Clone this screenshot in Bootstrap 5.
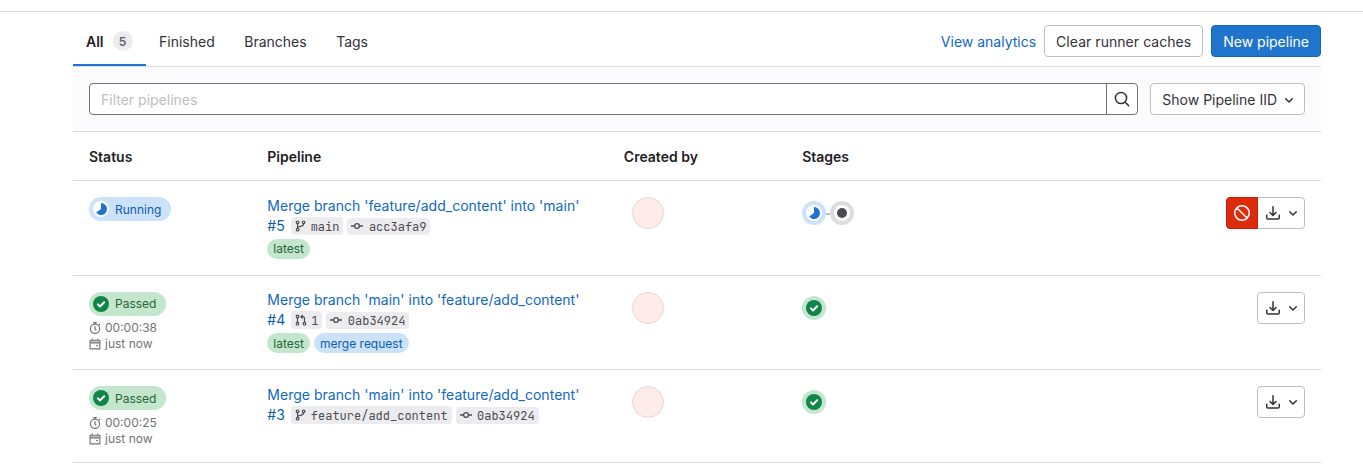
<!DOCTYPE html>
<html lang="en">
<head>
<meta charset="utf-8">
<meta name="viewport" content="width=device-width, initial-scale=1">
<title>Pipelines</title>
<link href="https://cdn.jsdelivr.net/npm/bootstrap@5.3.0/dist/css/bootstrap.min.css" rel="stylesheet">
<style>
body{font-family:Inter,"Noto Sans",sans-serif;font-size:14px;line-height:20px;color:#333238;background:#fff;overflow:hidden}
a{text-decoration:none;color:#1068bf}
svg{display:block;flex:none}
.topline{height:12px;border-bottom:1px solid #dcdcde}
.page{width:1248px;margin-left:73px}
.tabs{height:55px;border-bottom:1px solid #dcdcde}
.tabs .nav-link{color:#333238;padding:0 16.5px 0 13px;height:54px;line-height:60px;border-radius:0}
.tabs .nav-link.active{font-weight:600;color:#1f1e24;box-shadow:inset 0 -2px 0 #1f75cb;width:73px;padding:6px 0 0 13px;line-height:20px;gap:9px}
.count{background:#ececef;color:#626168;font-size:12px;font-weight:600;width:20px;height:20px;line-height:21px;border-radius:10px;text-align:center;margin-bottom:2px}
.analytics{padding-top:2px}
.btn{--bs-btn-font-size:14px;--bs-btn-line-height:20px;--bs-btn-padding-y:5px;--bs-btn-padding-x:11px;--bs-btn-border-radius:4px;height:32px;white-space:nowrap}
.btn-plain{--bs-btn-color:#333238;--bs-btn-bg:#fff;--bs-btn-border-color:#bfbfc3}
.btn-new{--bs-btn-color:#fff;--bs-btn-bg:#1f75cb;--bs-btn-border-color:#1068bf}
.btn-clear{letter-spacing:.045px}
.btn-clear,.btn-new{padding-top:6px;padding-bottom:4px}
.btn-stop{--bs-btn-color:#fff;--bs-btn-bg:#dd2b0e;--bs-btn-border-color:#c91c00;width:32px;z-index:2}
.btn-dl{padding:0 3px 0 7px;gap:4px}
.btn-iid{padding:6px 7px 4px 11px}
.filters{height:65px;background:#fbfafd;border-bottom:1px solid #dcdcde;gap:12px}
.filters .form-control{font-size:14px;line-height:20px;height:32px;padding:5px 11px;border:1px solid #737278;border-radius:4px}
.filters .form-control::placeholder{color:#bfbfc3}
.btn-search{--bs-btn-bg:#fff;--bs-btn-color:#333238;--bs-btn-border-color:#737278;width:32px}
.pipes{table-layout:fixed;margin:0;color:inherit;--bs-table-bg:transparent;border-color:#dcdcde}
.pipes>:not(caption)>*>*{padding:16px 16px 10px;vertical-align:top}
.pipes th{font-weight:600;color:#1f1e24;height:48px;padding:15px 16px 12px!important}
.pipes td{height:94px}
.pipes .tall td{height:95px}
.pipes .short td{height:93px}
.status{height:24px;border-radius:12px;padding:0 10px 0 4px;gap:6px;font-size:12px;line-height:22px;vertical-align:top}
.tall .status span,.short .status span{padding-top:2px}
.meta{font-size:12px;line-height:16px;color:#737278;gap:4px}
.status + .meta{margin-top:4px}
.short .status + .meta{margin-top:5px}
.title{margin-top:-1px;letter-spacing:.02px}
.up .title{margin-top:-2px}
.num{margin-right:2px;color:#0b5cad}
.tagrow{margin-top:3px}
.tag-blue{background:#cbe2f9;color:#0b5cad}
.tag-green{background:#c3e6cd;color:#24663b}
.tag{font-size:12px;line-height:21px;height:20px;border-radius:10px;padding:0 6px}
.tall .tag{line-height:20px}
.ref{font-family:"JetBrains Mono","DejaVu Sans Mono",monospace;font-size:12px;line-height:16px;height:18px;background:#ececef;color:#4c4b51;border-radius:4px;padding:0 4px;gap:4px}
.ref span{padding-top:2px}
.ref.sha{gap:5.4px;height:17px;margin-top:1px;line-height:18px}
.ref.sha span{padding-top:1px}
.face{width:32px;height:32px;border-radius:50%;background:#feecea;border:1px solid #ecd5d3;margin-left:8px}
.link-bar{width:4px;height:2px;background:#bfbfc3;margin-top:2px}
</style>
</head>
<body>
<svg class="d-none" xmlns="http://www.w3.org/2000/svg">
<symbol id="chev" viewBox="0 0 16 16"><path fill="currentColor" d="M4.22 6.22a.75.75 0 0 1 1.06 0L8 8.94l2.72-2.72a.75.75 0 1 1 1.06 1.06l-3.25 3.25a.75.75 0 0 1-1.06 0L4.22 7.28a.75.75 0 0 1 0-1.06z"/></symbol>
<symbol id="dl" viewBox="0 0 16 16"><path fill="none" stroke="currentColor" stroke-width="1.5" stroke-linecap="round" stroke-linejoin="round" d="M8 1.7v8.600M5 7.500l3 3 3-3M1.750 10.200v2.500c0 .8.500 1.300 1.300 1.300h9.900c.8 0 1.300-.5 1.300-1.300v-2.500"/></symbol>
<symbol id="ban" viewBox="0 0 16 16"><path fill="none" stroke="currentColor" stroke-width="1.5" d="M15.25 8A7.25 7.25 0 1 1 .75 8a7.25 7.25 0 0 1 14.5 0zM3 3l10 10"/></symbol>
<symbol id="find" viewBox="0 0 16 16"><path fill="none" stroke="currentColor" stroke-width="1.5" stroke-linecap="round" d="M12.6 7A5.6 5.6 0 1 1 1.4 7a5.6 5.6 0 0 1 11.2 0zM11.2 11.2l3.4 3.4"/></symbol>
<symbol id="branch" viewBox="0 0 12 12"><g fill="none" stroke="currentColor" stroke-width="1.2"><circle cx="2.600" cy="2.300" r="1.300"/><circle cx="2.600" cy="9.700" r="1.300"/><circle cx="8.600" cy="2.300" r="1.300"/><path d="M2.600 3.600v4.800M8.600 3.600c0 2.200-1.200 2.600-3 2.700S2.800 6.900 2.600 8"/></g></symbol>
<symbol id="mr" viewBox="0 0 12 12"><g fill="none" stroke="currentColor" stroke-width="1.2"><circle cx="2.500" cy="2.500" r="1.300"/><circle cx="2.500" cy="9.700" r="1.300"/><circle cx="9.500" cy="9.700" r="1.300"/><path d="M2.500 4v4.300M9.500 8.300V4.500c0-1.200-.6-1.800-1.800-1.800H6.200M7.700.8 5.900 2.700l1.800 1.800"/></g></symbol>
<symbol id="commit" viewBox="0 0 12 12"><g fill="none" stroke="currentColor" stroke-width="1.300"><circle cx="6" cy="6" r="2.400"/><path d="M0 6h3.600M8.400 6H12"/></g></symbol>
<symbol id="timer" viewBox="0 0 12 12"><g fill="none" stroke="currentColor" stroke-width="1.200"><circle cx="6" cy="6.800" r="4.600"/><path d="M4.300.7h3.400M6 .8v1.500M6 4.300v2.600l1.400 1.300M10 1.800l1.200 1.200"/></g></symbol>
<symbol id="cal" viewBox="0 0 12 12"><path fill="none" stroke="currentColor" stroke-width="1.100" d="M1.100 2.300h9.800v8.600H1.100zM1 4.900h10M3.200.5v2M8.800.5v2"/><path fill="currentColor" fill-opacity=".4" d="M1.500 2.500h9v2.200h-9z"/><path fill="currentColor" d="M7.200 7h1.800v1.300H7.200z"/></symbol>
<symbol id="pass" viewBox="0 0 16 16"><circle cx="8" cy="8" r="8" fill="#108548"/><path fill="none" stroke="#fff" stroke-width="2" stroke-linecap="round" stroke-linejoin="round" d="M4.900 8.400l2.100 2.100 4.200-4.200"/></symbol>
<symbol id="run" viewBox="0 0 16 16"><circle cx="8" cy="8" r="8" fill="#fff"/><path fill="#1f75cb" d="M8 2a6 6 0 1 1-4.800 9.600L8 8z"/></symbol>
<symbol id="ring-run" viewBox="0 0 24 24"><circle cx="12" cy="12" r="12" fill="#cbe2f9"/><use href="#run" x="4" y="4" width="16" height="16"/></symbol>
<symbol id="ring-pass" viewBox="0 0 24 24"><circle cx="12" cy="12" r="12" fill="#c3e6cd"/><use href="#pass" x="4" y="4" width="16" height="16"/></symbol>
<symbol id="ring-wait" viewBox="0 0 24 24"><circle cx="12" cy="12" r="12" fill="#dcdcde"/><circle cx="12" cy="12" r="8" fill="#fff"/><circle cx="12" cy="12" r="5" fill="#4c4b51"/></symbol>
</svg>

<div class="topline"></div>
<main class="page">
  <div class="tabs d-flex justify-content-between">
    <ul class="nav flex-nowrap">
      <li class="nav-item"><a class="nav-link active d-flex align-items-center" href="#"><span>All</span><span class="count">5</span></a></li>
      <li class="nav-item"><a class="nav-link" href="#">Finished</a></li>
      <li class="nav-item"><a class="nav-link" href="#">Branches</a></li>
      <li class="nav-item"><a class="nav-link" href="#">Tags</a></li>
    </ul>
    <div class="d-flex align-items-center gap-2 pt-1">
      <a href="#" class="analytics">View analytics</a>
      <button class="btn btn-plain btn-clear">Clear runner caches</button>
      <button class="btn btn-new">New pipeline</button>
    </div>
  </div>
  <div class="filters d-flex align-items-center px-3">
    <div class="input-group flex-nowrap flex-fill">
      <input class="form-control" placeholder="Filter pipelines">
      <button class="btn btn-search d-flex align-items-center justify-content-center p-0" aria-label="Search"><svg width="16" height="16"><use href="#find"/></svg></button>
    </div>
    <button class="btn btn-plain btn-iid d-flex align-items-center flex-shrink-0">Show Pipeline IID<svg class="ms-1" width="16" height="16"><use href="#chev"/></svg></button>
  </div>
  <table class="table pipes">
    <colgroup><col style="width:14.286%"><col style="width:28.571%"><col style="width:14.286%"><col style="width:14.286%"><col style="width:28.571%"></colgroup>
    <thead><tr><th>Status</th><th>Pipeline</th><th>Created by</th><th>Stages</th><th></th></tr></thead>
    <tbody>
      <tr class="tall">
        <td><span class="status tag-blue d-inline-flex align-items-center"><svg width="16" height="16"><use href="#run"/></svg><span>Running</span></span></td>
        <td>
          <a class="title d-block text-nowrap" href="#">Merge branch 'feature/add_content' into 'main'</a>
          <div class="d-flex align-items-center gap-1"><a class="num" href="#">#5</a><span class="ref d-flex align-items-center"><svg width="12" height="12"><use href="#branch"/></svg><span>main</span></span><span class="ref sha d-flex align-items-center"><svg width="12" height="12"><use href="#commit"/></svg><span>acc3afa9</span></span></div>
          <div class="d-flex gap-1 tagrow"><span class="tag tag-green">latest</span></div>
        </td>
        <td><div class="face"></div></td>
        <td><div class="d-flex align-items-center pt-1"><svg width="24" height="24"><use href="#ring-run"/></svg><span class="link-bar"></span><svg width="24" height="24"><use href="#ring-wait"/></svg></div></td>
        <td><div class="btn-group float-end"><button class="btn btn-stop d-flex align-items-center justify-content-center p-0" aria-label="Cancel"><svg width="16" height="16"><use href="#ban"/></svg></button><button class="btn btn-plain btn-dl d-flex align-items-center" aria-label="Download"><svg width="16" height="16"><use href="#dl"/></svg><svg width="16" height="16"><use href="#chev"/></svg></button></div></td>
      </tr>
      <tr class="up">
        <td><span class="status tag-green d-inline-flex align-items-center"><svg width="16" height="16"><use href="#pass"/></svg><span>Passed</span></span>
          <div class="meta d-flex align-items-center"><svg width="12" height="12"><use href="#timer"/></svg>00:00:38</div>
          <div class="meta d-flex align-items-center"><svg width="12" height="12"><use href="#cal"/></svg>just now</div></td>
        <td>
          <a class="title d-block text-nowrap" href="#">Merge branch 'main' into 'feature/add_content'</a>
          <div class="d-flex align-items-center gap-1"><a class="num" href="#">#4</a><span class="ref d-flex align-items-center"><svg width="12" height="12"><use href="#mr"/></svg><span>1</span></span><span class="ref sha d-flex align-items-center"><svg width="12" height="12"><use href="#commit"/></svg><span>0ab34924</span></span></div>
          <div class="d-flex gap-1 tagrow"><span class="tag tag-green">latest</span><span class="tag tag-blue">merge request</span></div>
        </td>
        <td><div class="face"></div></td>
        <td><div class="d-flex align-items-center pt-1"><svg width="24" height="24"><use href="#ring-pass"/></svg></div></td>
        <td><button class="btn btn-plain btn-dl d-flex align-items-center float-end" aria-label="Download"><svg width="16" height="16"><use href="#dl"/></svg><svg width="16" height="16"><use href="#chev"/></svg></button></td>
      </tr>
      <tr class="short">
        <td><span class="status tag-green d-inline-flex align-items-center"><svg width="16" height="16"><use href="#pass"/></svg><span>Passed</span></span>
          <div class="meta d-flex align-items-center"><svg width="12" height="12"><use href="#timer"/></svg>00:00:25</div>
          <div class="meta d-flex align-items-center"><svg width="12" height="12"><use href="#cal"/></svg>just now</div></td>
        <td>
          <a class="title d-block text-nowrap" href="#">Merge branch 'main' into 'feature/add_content'</a>
          <div class="d-flex align-items-center gap-1"><a class="num" href="#">#3</a><span class="ref d-flex align-items-center"><svg width="12" height="12"><use href="#branch"/></svg><span>feature/add_content</span></span><span class="ref sha d-flex align-items-center"><svg width="12" height="12"><use href="#commit"/></svg><span>0ab34924</span></span></div>
        </td>
        <td><div class="face"></div></td>
        <td><div class="d-flex align-items-center pt-1"><svg width="24" height="24"><use href="#ring-pass"/></svg></div></td>
        <td><button class="btn btn-plain btn-dl d-flex align-items-center float-end" aria-label="Download"><svg width="16" height="16"><use href="#dl"/></svg><svg width="16" height="16"><use href="#chev"/></svg></button></td>
      </tr>
    </tbody>
  </table>
</main>
<script src="https://cdn.jsdelivr.net/npm/bootstrap@5.3.0/dist/js/bootstrap.bundle.min.js"></script>
</body>
</html>
